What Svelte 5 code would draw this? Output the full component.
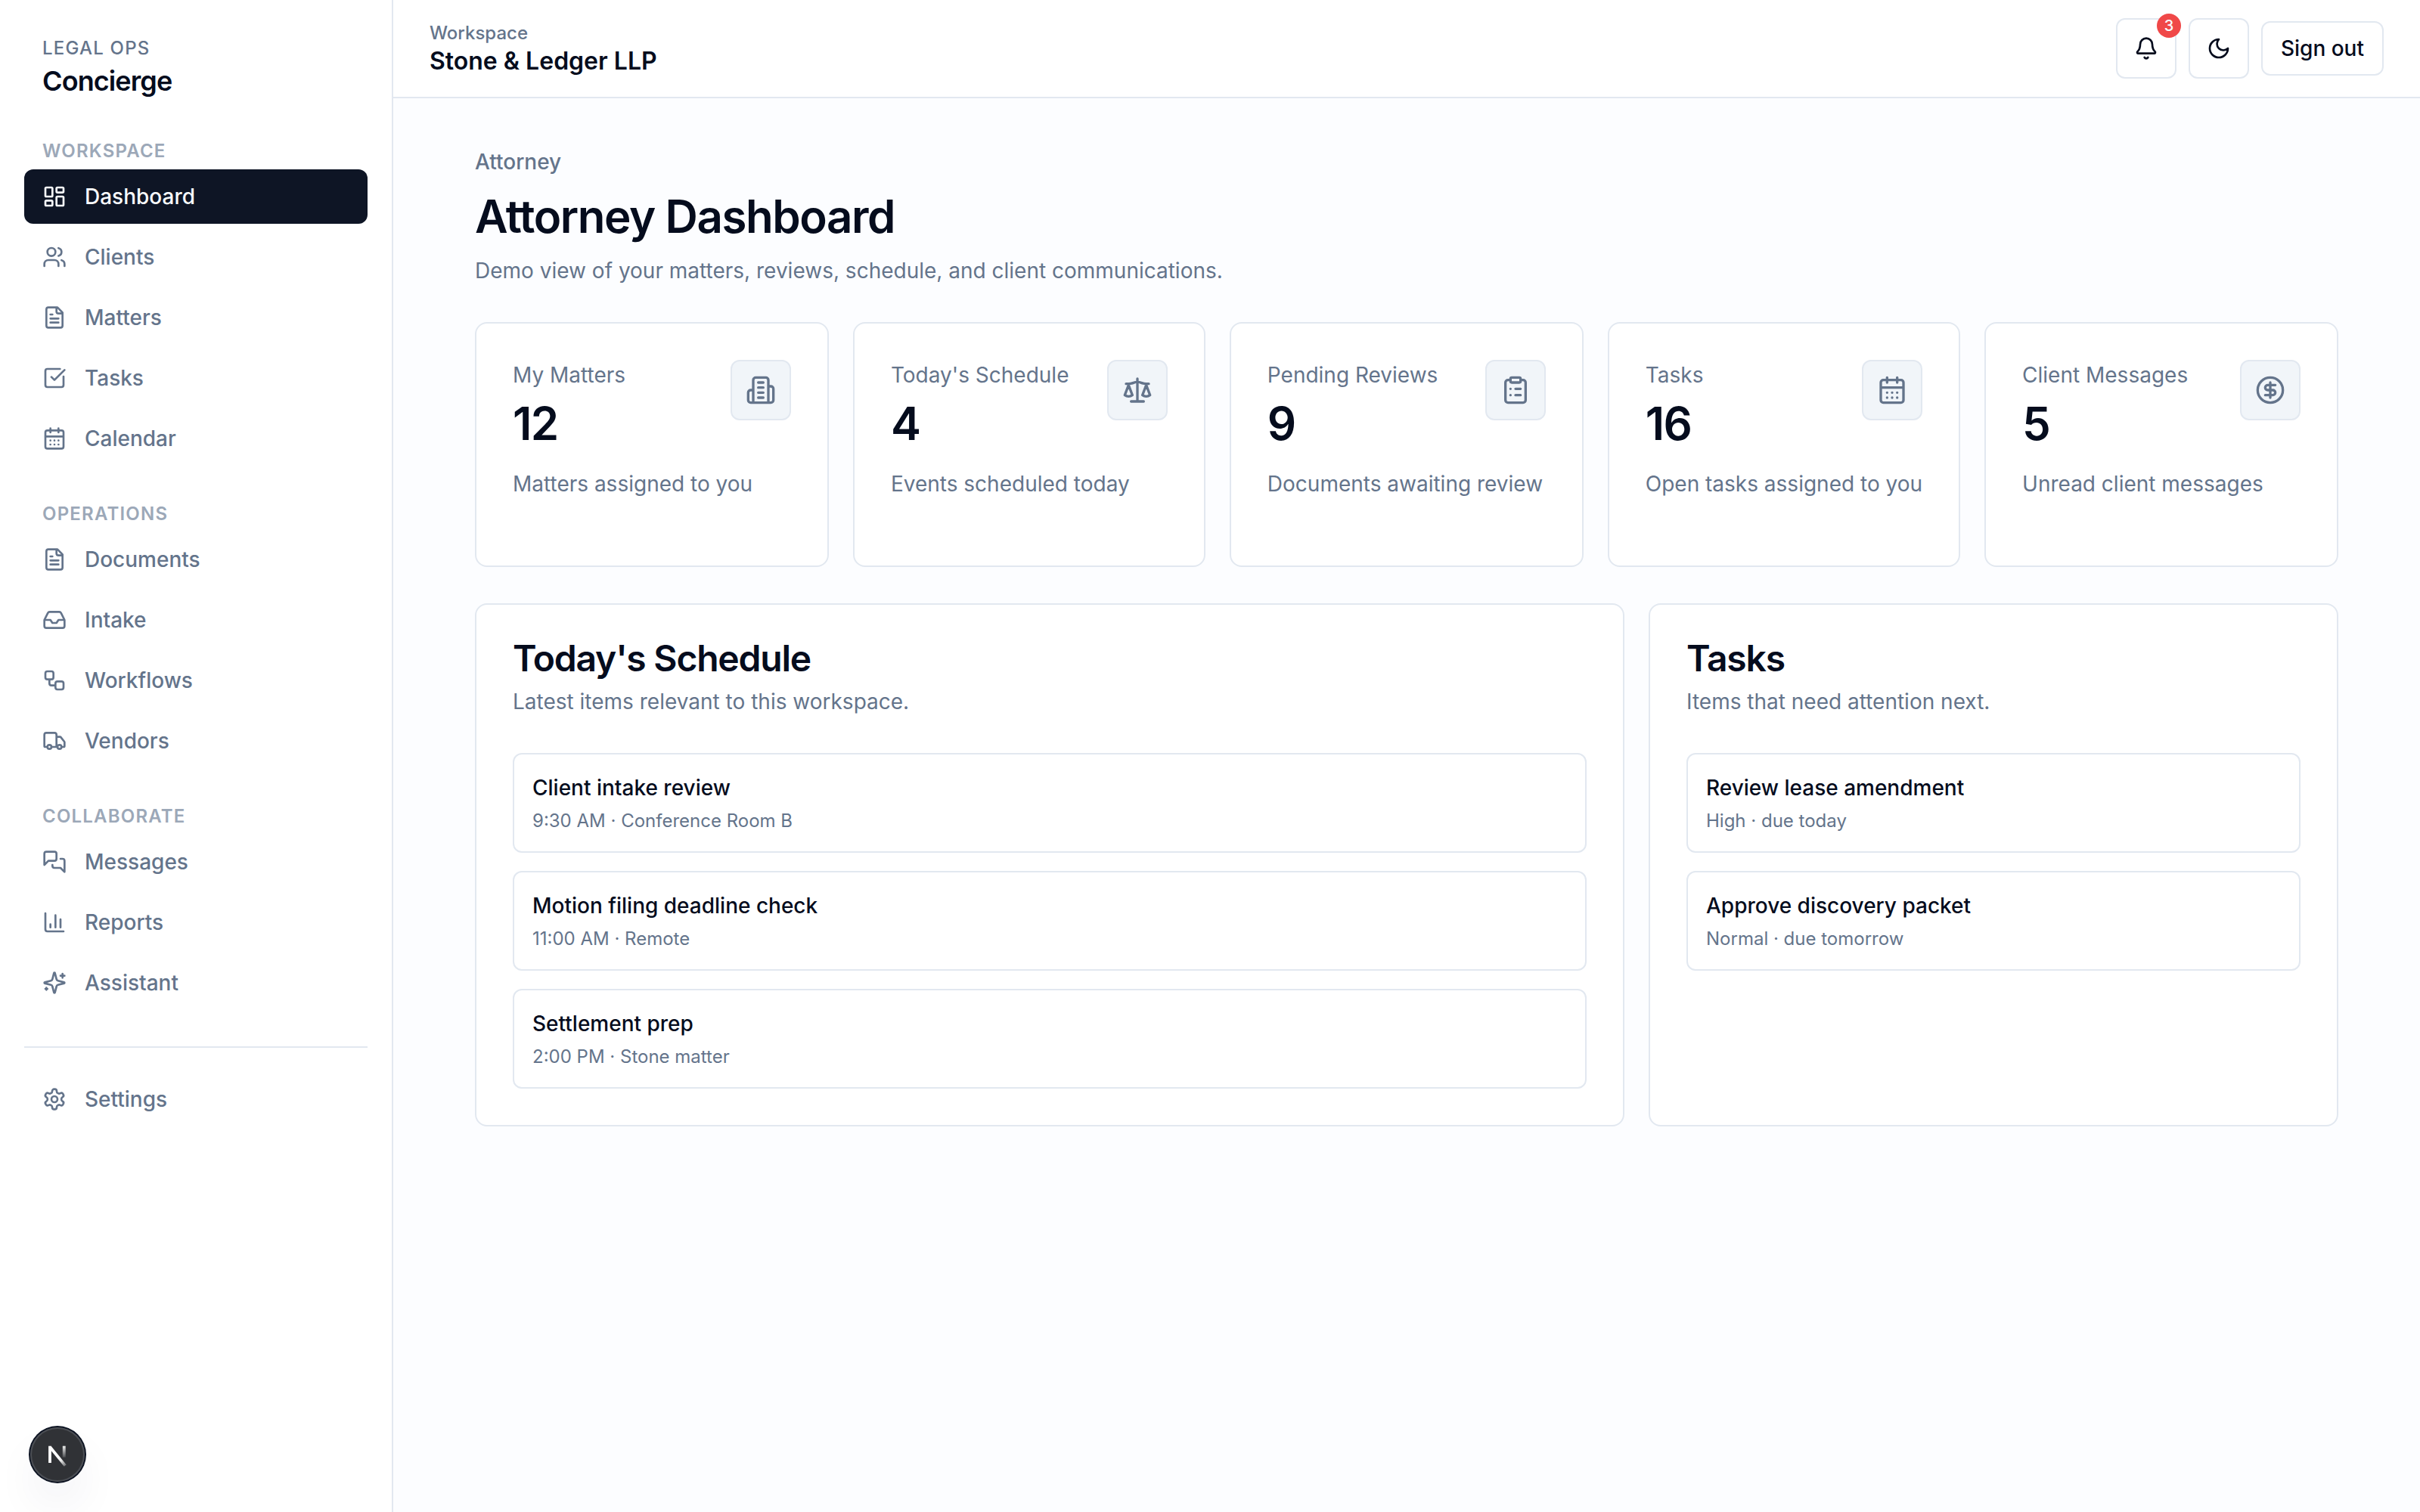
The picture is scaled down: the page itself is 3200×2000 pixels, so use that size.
<script>
  // Icon outlines on a 24 × 24 grid, drawn as one stroked path each.
  const icons = {
    dashboard:
      'M4 3h5a1 1 0 0 1 1 1v7a1 1 0 0 1-1 1H4a1 1 0 0 1-1-1V4a1 1 0 0 1 1-1zM15 3h5a1 1 0 0 1 1 1v3a1 1 0 0 1-1 1h-5a1 1 0 0 1-1-1V4a1 1 0 0 1 1-1zM15 12h5a1 1 0 0 1 1 1v7a1 1 0 0 1-1 1h-5a1 1 0 0 1-1-1v-7a1 1 0 0 1 1-1zM4 16h5a1 1 0 0 1 1 1v3a1 1 0 0 1-1 1H4a1 1 0 0 1-1-1v-3a1 1 0 0 1 1-1z',
    users:
      'M16 21v-2a4 4 0 0 0-4-4H6a4 4 0 0 0-4 4v2M13 7a4 4 0 1 1-8 0a4 4 0 1 1 8 0zM22 21v-2a4 4 0 0 0-3-3.87M16 3.13a4 4 0 0 1 0 7.75',
    file:
      'M15 2H6a2 2 0 0 0-2 2v16a2 2 0 0 0 2 2h12a2 2 0 0 0 2-2V7ZM14 2v4a2 2 0 0 0 2 2h4M10 9H8M16 13H8M16 17H8',
    check:
      'M21 10.5V19a2 2 0 0 1-2 2H5a2 2 0 0 1-2-2V5a2 2 0 0 1 2-2h12.5M9 11l3 3L22 4',
    calendar:
      'M8 2v4M16 2v4M5 4h14a2 2 0 0 1 2 2v14a2 2 0 0 1-2 2H5a2 2 0 0 1-2-2V6a2 2 0 0 1 2-2zM3 10h18M8 14h.01M12 14h.01M16 14h.01M8 18h.01M12 18h.01M16 18h.01',
    inbox:
      'M22 12h-6l-2 3h-4l-2-3H2M5.45 5.11 2 12v6a2 2 0 0 0 2 2h16a2 2 0 0 0 2-2v-6l-3.45-6.89A2 2 0 0 0 16.76 4H7.24a2 2 0 0 0-1.79 1.11z',
    workflow:
      'M5 3h4a2 2 0 0 1 2 2v4a2 2 0 0 1-2 2H5a2 2 0 0 1-2-2V5a2 2 0 0 1 2-2zM7 11v4a2 2 0 0 0 2 2h4M15 13h4a2 2 0 0 1 2 2v4a2 2 0 0 1-2 2h-4a2 2 0 0 1-2-2v-4a2 2 0 0 1 2-2z',
    truck:
      'M14 18V6a2 2 0 0 0-2-2H4a2 2 0 0 0-2 2v11a1 1 0 0 0 1 1h2M15 18H9M19 18h2a1 1 0 0 0 1-1v-3.65a1 1 0 0 0-.22-.624l-3.48-4.35A1 1 0 0 0 17.52 8H14M19 18a2 2 0 1 1-4 0a2 2 0 1 1 4 0zM9 18a2 2 0 1 1-4 0a2 2 0 1 1 4 0z',
    messages:
      'M14 9a2 2 0 0 1-2 2H6l-4 4V4a2 2 0 0 1 2-2h8a2 2 0 0 1 2 2zM18 9h2a2 2 0 0 1 2 2v11l-4-4h-6a2 2 0 0 1-2-2v-1',
    chart: 'M3 3v16a2 2 0 0 0 2 2h16M18 17V9M13 17V5M8 17v-3',
    sparkles:
      'M9.937 15.5A2 2 0 0 0 8.5 14.063l-6.135-1.582a.5.5 0 0 1 0-.962L8.5 9.936A2 2 0 0 0 9.937 8.5l1.582-6.135a.5.5 0 0 1 .963 0L14.063 8.5A2 2 0 0 0 15.5 9.937l6.135 1.581a.5.5 0 0 1 0 .964L15.5 14.063a2 2 0 0 0-1.437 1.437l-1.582 6.135a.5.5 0 0 1-.963 0zM20 3v4M22 5h-4M4 17v2M5 18H3',
    settings:
      'M12.22 2h-.44a2 2 0 0 0-2 2v.18a2 2 0 0 1-1 1.73l-.43.25a2 2 0 0 1-2 0l-.15-.08a2 2 0 0 0-2.73.73l-.22.38a2 2 0 0 0 .73 2.73l.15.1a2 2 0 0 1 1 1.72v.51a2 2 0 0 1-1 1.74l-.15.09a2 2 0 0 0-.73 2.73l.22.38a2 2 0 0 0 2.73.73l.15-.08a2 2 0 0 1 2 0l.43.25a2 2 0 0 1 1 1.73V20a2 2 0 0 0 2 2h.44a2 2 0 0 0 2-2v-.18a2 2 0 0 1 1-1.73l.43-.25a2 2 0 0 1 2 0l.15.08a2 2 0 0 0 2.73-.73l.22-.39a2 2 0 0 0-.73-2.73l-.15-.08a2 2 0 0 1-1-1.74v-.5a2 2 0 0 1 1-1.74l.15-.09a2 2 0 0 0 .73-2.73l-.22-.38a2 2 0 0 0-2.73-.73l-.15.08a2 2 0 0 1-2 0l-.43-.25a2 2 0 0 1-1-1.73V4a2 2 0 0 0-2-2zM15 12a3 3 0 1 1-6 0a3 3 0 1 1 6 0z',
    bell:
      'M10.268 21a2 2 0 0 0 3.464 0M3.262 15.326A1 1 0 0 0 4 17h16a1 1 0 0 0 .74-1.673C19.41 13.956 18 12.499 18 8A6 6 0 0 0 6 8c0 4.499-1.411 5.956-2.738 7.326',
    moon: 'M12 3a6 6 0 0 0 9 9 9 9 0 1 1-9-9Z',
    building:
      'M6 22V4a2 2 0 0 1 2-2h8a2 2 0 0 1 2 2v18ZM6 12H4a2 2 0 0 0-2 2v6a2 2 0 0 0 2 2h2M18 9h2a2 2 0 0 1 2 2v9a2 2 0 0 1-2 2h-2M10 6h4M10 10h4M10 14h4M10 18h4',
    scale:
      'M16 16l3-8 3 8c-.87.65-1.92 1-3 1s-2.13-.35-3-1ZM2 16l3-8 3 8c-.87.65-1.92 1-3 1s-2.13-.35-3-1ZM7 21h10M12 3v18M3 7h2c2 0 5-1 7-2 2 1 5 2 7 2h2',
    clipboard:
      'M9 2h6a1 1 0 0 1 1 1v2a1 1 0 0 1-1 1H9a1 1 0 0 1-1-1V3a1 1 0 0 1 1-1zM16 4h2a2 2 0 0 1 2 2v14a2 2 0 0 1-2 2H6a2 2 0 0 1-2-2V6a2 2 0 0 1 2-2h2M12 11h4M12 16h4M8 11h.01M8 16h.01',
    dollar:
      'M22 12a10 10 0 1 1-20 0a10 10 0 1 1 20 0zM16 8h-6a2 2 0 1 0 0 4h4a2 2 0 1 1 0 4H8M12 18V6',
  };

  const sections = [
    {
      title: 'Workspace',
      items: [
        { label: 'Dashboard', icon: 'dashboard', active: true },
        { label: 'Clients', icon: 'users' },
        { label: 'Matters', icon: 'file' },
        { label: 'Tasks', icon: 'check' },
        { label: 'Calendar', icon: 'calendar' },
      ],
    },
    {
      title: 'Operations',
      items: [
        { label: 'Documents', icon: 'file' },
        { label: 'Intake', icon: 'inbox' },
        { label: 'Workflows', icon: 'workflow' },
        { label: 'Vendors', icon: 'truck' },
      ],
    },
    {
      title: 'Collaborate',
      items: [
        { label: 'Messages', icon: 'messages' },
        { label: 'Reports', icon: 'chart' },
        { label: 'Assistant', icon: 'sparkles' },
      ],
    },
  ];

  const stats = [
    { label: 'My Matters', value: 12, note: 'Matters assigned to you', icon: 'building' },
    { label: "Today's Schedule", value: 4, note: 'Events scheduled today', icon: 'scale' },
    { label: 'Pending Reviews', value: 9, note: 'Documents awaiting review', icon: 'clipboard' },
    { label: 'Tasks', value: 16, note: 'Open tasks assigned to you', icon: 'calendar' },
    { label: 'Client Messages', value: 5, note: 'Unread client messages', icon: 'dollar' },
  ];

  const panels = [
    {
      title: "Today's Schedule",
      subtitle: 'Latest items relevant to this workspace.',
      items: [
        { title: 'Client intake review', meta: '9:30 AM · Conference Room B' },
        { title: 'Motion filing deadline check', meta: '11:00 AM · Remote' },
        { title: 'Settlement prep', meta: '2:00 PM · Stone matter' },
      ],
    },
    {
      title: 'Tasks',
      subtitle: 'Items that need attention next.',
      items: [
        { title: 'Review lease amendment', meta: 'High · due today' },
        { title: 'Approve discovery packet', meta: 'Normal · due tomorrow' },
      ],
    },
  ];
</script>

{#snippet icon(name)}
  <svg class="icon" viewBox="0 0 24 24" aria-hidden="true"><path d={icons[name]} /></svg>
{/snippet}

{#snippet navItem(item)}
  <a class="nav-item" class:active={item.active} href="#top">
    {@render icon(item.icon)}
    <span>{item.label}</span>
  </a>
{/snippet}

<div class="app">
  <aside class="sidebar">
    <div class="brand">
      <p class="brand-kicker">Legal Ops</p>
      <p class="brand-name">Concierge</p>
    </div>
    <nav class="nav">
      {#each sections as section}
        <section class="nav-section">
          <h2 class="nav-title">{section.title}</h2>
          {#each section.items as item}
            {@render navItem(item)}
          {/each}
        </section>
      {/each}
      <div class="nav-footer">
        {@render navItem({ label: 'Settings', icon: 'settings' })}
      </div>
    </nav>
  </aside>

  <div class="content">
    <header class="topbar">
      <div class="workspace">
        <p class="workspace-label">Workspace</p>
        <p class="workspace-name">Stone &amp; Ledger LLP</p>
      </div>
      <div class="actions">
        <button class="square" aria-label="Notifications">
          {@render icon('bell')}
          <span class="badge">3</span>
        </button>
        <button class="square" aria-label="Toggle theme">{@render icon('moon')}</button>
        <button class="sign-out">Sign out</button>
      </div>
    </header>

    <main class="main">
      <div class="intro">
        <p class="role">Attorney</p>
        <h1>Attorney Dashboard</h1>
        <p class="lead">Demo view of your matters, reviews, schedule, and client communications.</p>
      </div>

      <div class="stats">
        {#each stats as stat}
          <article class="card stat">
            <div class="stat-head">
              <div>
                <p class="stat-label">{stat.label}</p>
                <p class="stat-value">{stat.value}</p>
              </div>
              <div class="stat-icon">{@render icon(stat.icon)}</div>
            </div>
            <p class="stat-note">{stat.note}</p>
          </article>
        {/each}
      </div>

      <div class="panels">
        {#each panels as panel}
          <section class="card panel">
            <h2 class="panel-title">{panel.title}</h2>
            <p class="panel-subtitle">{panel.subtitle}</p>
            <div class="rows">
              {#each panel.items as item}
                <div class="row">
                  <p class="row-title">{item.title}</p>
                  <p class="row-meta">{item.meta}</p>
                </div>
              {/each}
            </div>
          </section>
        {/each}
      </div>
    </main>
  </div>

  <button class="dev-badge" aria-label="Open developer tools">
    <svg viewBox="0 0 72 72" aria-hidden="true">
      <defs>
        <linearGradient id="diag" gradientUnits="userSpaceOnUse" x1="37" y1="39" x2="46.5" y2="51">
          <stop offset="0" stop-color="#fff" />
          <stop offset="0.4" stop-color="#fff" stop-opacity="0.9" />
          <stop offset="1" stop-color="#fff" stop-opacity="0.3" />
        </linearGradient>
        <linearGradient id="bar" gradientUnits="userSpaceOnUse" x1="45" y1="24" x2="45" y2="40">
          <stop offset="0" stop-color="#fff" stop-opacity="0.95" />
          <stop offset="1" stop-color="#fff" stop-opacity="0.12" />
        </linearGradient>
      </defs>
      <path class="mark-stem" d="M26 47V24.7" />
      <path class="mark-diagonal" d="M26.3 26.2 46.2 50.6" stroke="url(#diag)" />
      <rect x="42.8" y="24.7" width="3.9" height="15" fill="url(#bar)" />
    </svg>
  </button>
</div>

<style>
  :global(body) {
    margin: 0;
    background: #fcfdff;
  }

  .app {
    --fg: #050c1d;
    --muted: #64748b;
    --line: #e2e8f0;
    display: grid;
    grid-template-columns: 520px 1fr;
    min-height: 2000px;
    color: var(--fg);
    font-family: Inter, 'Liberation Sans', sans-serif;
    font-size: 28px;
    line-height: 40px;
    -webkit-font-smoothing: antialiased;
  }

  .app * {
    box-sizing: border-box;
  }

  p,
  h1,
  h2 {
    margin: 0;
  }

  button {
    padding: 0;
    font: inherit;
    color: inherit;
  }

  .icon {
    display: block;
    flex: none;
    width: 32px;
    height: 32px;
    fill: none;
    stroke: currentColor;
    stroke-width: 2;
    stroke-linecap: round;
    stroke-linejoin: round;
  }

  /* Sidebar */
  .sidebar {
    padding: 48px 32px;
    background: #fff;
    border-right: 2px solid var(--line);
  }

  .brand {
    padding: 0 24px;
    margin-bottom: 50px;
  }

  .brand-kicker {
    font-size: 24px;
    line-height: 32px;
    font-weight: 500;
    letter-spacing: 0.05em;
    text-transform: uppercase;
    color: var(--muted);
  }

  .brand-name {
    font-size: 36px;
    line-height: 54px;
    font-weight: 600;
    letter-spacing: -0.025em;
  }

  .nav {
    display: flex;
    flex-direction: column;
    gap: 48px;
  }

  .nav-section {
    display: flex;
    flex-direction: column;
    gap: 8px;
  }

  .nav-title {
    padding: 0 24px;
    font-size: 24px;
    line-height: 32px;
    font-weight: 600;
    letter-spacing: 0.05em;
    text-transform: uppercase;
    color: #9ca8b8;
  }

  .nav-item {
    display: flex;
    align-items: center;
    gap: 24px;
    height: 72px;
    padding: 0 24px;
    border-radius: 12px;
    font-weight: 500;
    color: var(--muted);
    text-decoration: none;
  }

  .nav-item.active {
    background: #0e1525;
    color: #f8fafc;
  }

  .nav-footer {
    padding-top: 32px;
    border-top: 2px solid var(--line);
  }

  /* Top bar */
  .content {
    display: flex;
    flex-direction: column;
    min-width: 0;
  }

  .topbar {
    display: flex;
    align-items: center;
    justify-content: space-between;
    height: 130px;
    padding: 0 48px;
    background: #fff;
    border-bottom: 2px solid var(--line);
  }

  .workspace {
    padding-top: 1px;
  }

  .workspace-label {
    font-size: 24px;
    line-height: 32px;
    font-weight: 500;
    color: var(--muted);
  }

  .workspace-name {
    margin-top: 1px;
    font-size: 32px;
    line-height: 40px;
    font-weight: 600;
  }

  .actions {
    display: flex;
    align-items: center;
    gap: 16px;
  }

  .actions button {
    display: flex;
    align-items: center;
    justify-content: center;
    background: #fff;
    border: 2px solid var(--line);
    border-radius: 12px;
    font-weight: 500;
  }

  .actions .square {
    position: relative;
    width: 80px;
    height: 80px;
  }

  .actions .sign-out {
    height: 72px;
    padding: 0 24px;
  }

  .badge {
    position: absolute;
    top: -8px;
    right: -8px;
    width: 32px;
    height: 32px;
    border-radius: 50%;
    background: #f04848;
    color: #f8fafc;
    font-size: 20px;
    line-height: 32px;
    font-weight: 500;
    text-align: center;
  }

  /* Page body */
  .main {
    display: flex;
    flex-direction: column;
    gap: 48px;
    width: 100%;
    max-width: 2560px;
    margin: 0 auto;
    padding: 64px 48px;
    box-sizing: border-box;
  }

  .intro {
    display: flex;
    flex-direction: column;
    gap: 16px;
  }

  .role {
    font-weight: 500;
    color: var(--muted);
  }

  h1 {
    font-size: 60px;
    line-height: 72px;
    font-weight: 600;
    letter-spacing: -0.024em;
  }

  .lead {
    color: var(--muted);
  }

  .card {
    background: #fff;
    border: 2px solid var(--line);
    border-radius: 16px;
    padding: 48px;
  }

  .stats {
    display: grid;
    grid-template-columns: 468fr 466fr 468fr 466fr 468fr;
    gap: 32px;
  }

  .stat {
    height: 324px;
  }

  .stat-head {
    display: flex;
    justify-content: space-between;
    align-items: flex-start;
    margin-bottom: 24px;
  }

  .stat-label,
  .stat-note,
  .panel-subtitle {
    color: var(--muted);
    white-space: nowrap;
  }

  .stat-value {
    margin-top: 8px;
    font-size: 60px;
    line-height: 72px;
    font-weight: 600;
    letter-spacing: -0.025em;
  }

  .stat-icon {
    display: flex;
    align-items: center;
    justify-content: center;
    width: 80px;
    height: 80px;
    background: #f1f5f9;
    border: 2px solid var(--line);
    border-radius: 12px;
    color: var(--muted);
  }

  .stat-icon .icon {
    width: 40px;
    height: 40px;
  }

  .panels {
    display: grid;
    grid-template-columns: 5fr 3fr;
    gap: 32px;
  }

  .panel-title {
    font-size: 48px;
    line-height: 46px;
    font-weight: 600;
    letter-spacing: -0.025em;
  }

  .panel-subtitle {
    margin-top: 14px;
  }

  .rows {
    display: flex;
    flex-direction: column;
    gap: 24px;
    margin-top: 48px;
  }

  .row {
    padding: 24px;
    border: 2px solid var(--line);
    border-radius: 12px;
  }

  .row-title {
    font-weight: 500;
  }

  .row-meta {
    margin-top: 8px;
    font-size: 24px;
    line-height: 32px;
    color: var(--muted);
  }

  /* Floating developer badge */
  .dev-badge {
    position: fixed;
    left: 40px;
    bottom: 40px;
    width: 72px;
    height: 72px;
    border: 0;
    border-radius: 50%;
    background: #303236;
    box-shadow:
      0 0 0 2px #0c1322,
      inset 0 0 0 2px #4b4e54,
      0 32px 64px -16px rgba(15, 40, 80, 0.16);
  }

  .dev-badge svg {
    display: block;
    width: 72px;
    height: 72px;
    fill: none;
    stroke-width: 3.8;
  }

  .mark-stem {
    stroke: #fff;
  }
</style>
